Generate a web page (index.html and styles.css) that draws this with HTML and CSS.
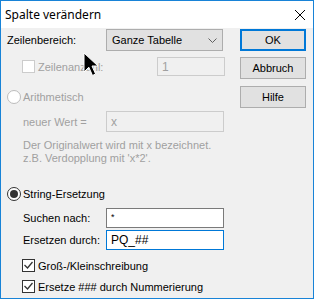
FILE: index.html
```html
<!DOCTYPE html>
<html lang="de">
<head>
  <meta charset="UTF-8" />
  <title>Spalte verändern</title>
  <link rel="stylesheet" href="styles.css">
</head>
<body>
  <div class="dialog">
    <div class="titlebar">
      <span class="title">Spalte verändern</span>
      <svg class="close" width="12" height="12" viewBox="0 0 12 12">
        <path d="M1 1 L11 11 M11 1 L1 11" stroke="#000" stroke-width="1" fill="none"/>
      </svg>
    </div>

    <div class="content">
      <div class="form">
        <div class="row row-range">
          <span class="label">Zeilenbereich:</span>
          <div class="combo">
            <span>Ganze Tabelle</span>
            <svg class="chevron" width="9" height="5" viewBox="0 0 9 5">
              <path d="M0.5 0.5 L4.5 4.5 L8.5 0.5" stroke="#606060" fill="none"/>
            </svg>
          </div>
        </div>

        <div class="row row-count">
          <span class="check disabled"></span>
          <span class="label disabled-text">Zeilenanzahl:</span>
          <div class="field disabled-field count-field">1</div>
        </div>

        <div class="row row-arith">
          <span class="radio disabled"></span>
          <span class="label disabled-text">Arithmetisch</span>
        </div>

        <div class="row row-value">
          <span class="label indent disabled-text">neuer Wert =</span>
          <div class="field disabled-field">x</div>
        </div>

        <div class="note disabled-text">
          <div>Der Originalwert wird mit x bezeichnet.</div>
          <div>z.B. Verdopplung mit 'x*2'.</div>
        </div>

        <div class="row row-string">
          <span class="radio checked"></span>
          <span class="label">String-Ersetzung</span>
        </div>

        <div class="row row-search">
          <span class="label indent">Suchen nach:</span>
          <div class="field"><span class="star">*</span></div>
        </div>

        <div class="row row-replace">
          <span class="label indent">Ersetzen durch:</span>
          <div class="field focused">PQ_##</div>
        </div>

        <div class="row row-case">
          <span class="check checked">
            <svg width="11" height="11" viewBox="0 0 11 11"><path d="M1.5 5 L4.5 8 L9.5 2" stroke="#333" stroke-width="1.3" fill="none"/></svg>
          </span>
          <span class="label">Groß-/Kleinschreibung</span>
        </div>

        <div class="row row-number">
          <span class="check checked">
            <svg width="11" height="11" viewBox="0 0 11 11"><path d="M1.5 5 L4.5 8 L9.5 2" stroke="#333" stroke-width="1.3" fill="none"/></svg>
          </span>
          <span class="label">Ersetze ### durch Nummerierung</span>
        </div>
      </div>

      <div class="buttons">
        <button class="btn default">OK</button>
        <button class="btn cancel">Abbruch</button>
        <button class="btn help">Hilfe</button>
      </div>
    </div>

    <!-- mouse pointer caught in the screenshot -->
    <svg class="cursor" width="17" height="25" viewBox="0 0 17 25">
      <path d="M1 1 V20 L5.8 15.2 L9.5 23.5 L12.6 22 L9 14 H15 Z" fill="#000" stroke="#fff" stroke-width="1"/>
    </svg>
  </div>
</body>
</html>
```

FILE: styles.css
```css
* {
  margin: 0;
  padding: 0;
  box-sizing: border-box;
}

body {
  background: #fff;
  font-family: 'Liberation Sans', Arial, sans-serif;
  font-size: 11px;
  color: #000;
}

.dialog {
  position: relative;
  width: 314px;
  height: 299px;
  border: 1px solid #1883d7;
  background: #f0f0f0;
}

.titlebar {
  height: 27px;
  background: #fff;
  display: flex;
  align-items: center;
  justify-content: space-between;
  padding: 0 6px 0 4px;
}

.title {
  font-family: 'Noto Sans', 'Open Sans', sans-serif;
  font-size: 12px;
}

.close {
  margin-right: 1px;
}

.content {
  display: flex;
}

.form {
  width: 239px;
  flex: none;
  padding-left: 6px;
}

.row {
  display: flex;
  align-items: center;
}

.label {
  white-space: nowrap;
}

.indent {
  width: 83px;
  flex: none;
  margin-left: 16px;
}

.disabled-text {
  color: #a0a0a0;
}

/* text boxes */
.field {
  width: 118px;
  height: 100%;
  flex: none;
  background: #fff;
  border: 1px solid #7a7a7a;
  padding: 0 4px;
  display: flex;
  align-items: center;
  font-size: 12px;
}

.disabled-field {
  background: #f0f0f0;
  border-color: #cccccc;
  color: #a0a0a0;
}

.focused {
  border-color: #0078d7;
}

.star {
  font-size: 9px;
  align-self: flex-start;
  margin-top: 3px;
}

.row-range {
  height: 22px;
  margin-top: 1px;
}

.row-range .label {
  width: 99px;
  flex: none;
}

.combo {
  width: 117px;
  height: 22px;
  background: #e1e1e1;
  border: 1px solid #adadad;
  display: flex;
  align-items: center;
  justify-content: space-between;
  padding: 0 5px 0 5px;
}

.row-count {
  height: 19px;
  margin-top: 6px;
}

.row-count .check {
  margin-left: 15px;
}

.row-count .label {
  width: 119px;
  flex: none;
  margin-left: 3px;
}

.count-field {
  width: 68px;
}

.row-arith {
  height: 14px;
  margin-top: 14px;
}

.row-arith .label,
.row-string .label {
  margin-left: 2px;
}

.row-value {
  height: 21px;
  margin-top: 7px;
}

.note {
  margin-top: 7px;
  margin-left: 16px;
  line-height: 13px;
}

.row-string {
  height: 14px;
  margin-top: 22px;
}

.row-search {
  height: 20px;
  margin-top: 7px;
}

.row-replace {
  height: 20px;
  margin-top: 2px;
}

.row-case {
  height: 15px;
  margin-top: 8px;
}

.row-number {
  height: 15px;
  margin-top: 6px;
}

.row-case .check,
.row-number .check {
  margin-left: 15px;
}

.row-case .label,
.row-number .label {
  margin-left: 3px;
}

.check {
  width: 13px;
  height: 13px;
  flex: none;
  background: #fff;
  border: 1px solid #333;
  display: flex;
  align-items: center;
  justify-content: center;
}

.check.disabled {
  border-color: #cccccc;
}

.radio {
  width: 14px;
  height: 14px;
  flex: none;
  border-radius: 50%;
  background: #fff;
  border: 1px solid #333;
  display: flex;
  align-items: center;
  justify-content: center;
}

.radio.disabled {
  border-color: #bcbcbc;
}

.radio.checked::after {
  content: '';
  width: 8px;
  height: 8px;
  border-radius: 50%;
  background: #333;
}

.buttons {
  display: flex;
  flex-direction: column;
  width: 66px;
  flex: none;
}

.btn {
  height: 22px;
  background: #e1e1e1;
  border: 1px solid #adadad;
  font-family: 'Liberation Sans', Arial, sans-serif;
  font-size: 11px;
  color: #000;
}

.btn.default {
  margin-top: 1px;
  border: 2px solid #0078d7;
}

.btn.cancel {
  margin-top: 6px;
}

.btn.help {
  margin-top: 7px;
}

.cursor {
  position: absolute;
  left: 82px;
  top: 51px;
}
```
